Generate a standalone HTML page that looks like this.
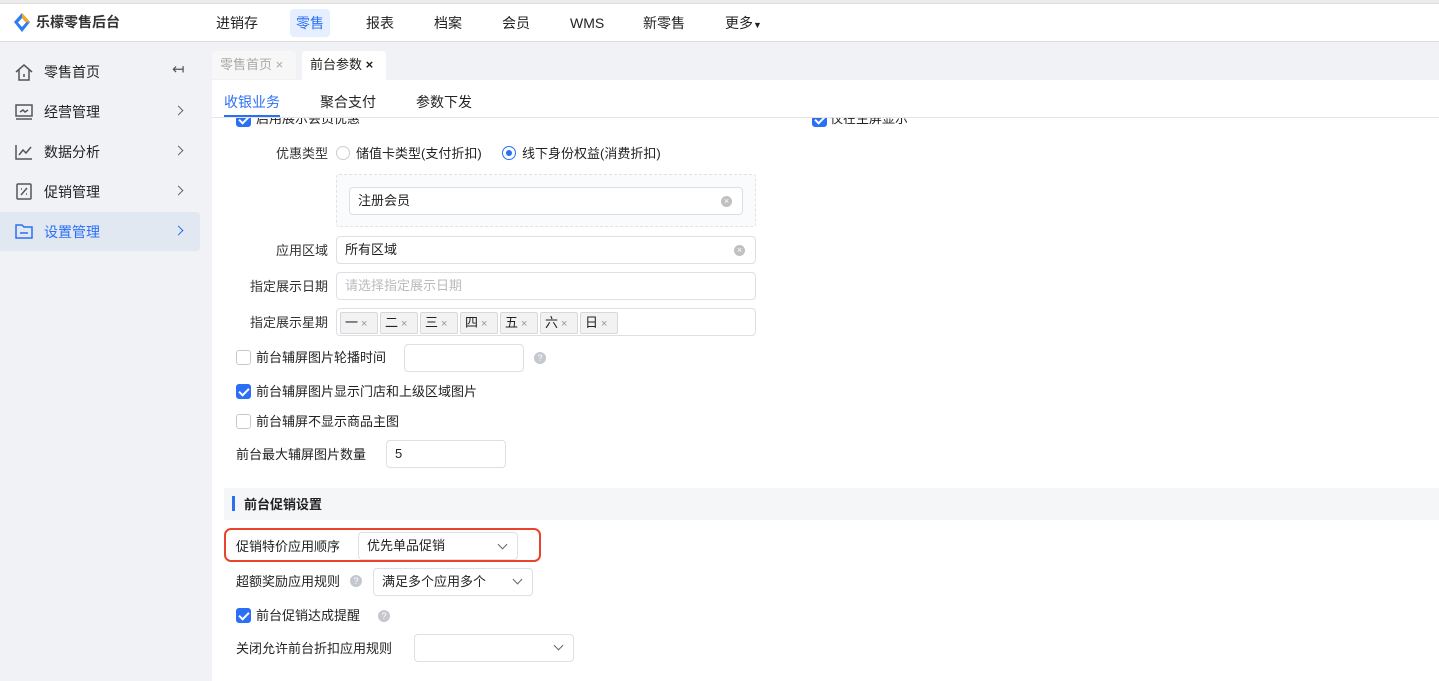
<!DOCTYPE html><html><head><meta charset="utf-8"><style>
*{box-sizing:border-box;margin:0;padding:0}
body{width:1439px;height:681px;overflow:hidden;font-family:"Liberation Sans","Noto Sans CJK SC",sans-serif;font-size:13px;line-height:15px;color:#222;background:#f0f2f5;position:relative}
.a{position:absolute}
.top{left:0;top:3px;width:1439px;height:39px;background:#fff;border-top:1px solid #ddd;border-bottom:1px solid #ddd}
.nav{top:9px;height:28px;line-height:28px;font-size:14px;padding:0 6px;border-radius:4px}
.side{font-size:14px;left:44px;line-height:18px}
.input{border:1px solid #dcdfe6;border-radius:4px;background:#fff;height:28px;line-height:26px;padding-left:8px;font-size:13px}
.lbl{font-size:13px;color:#333;text-align:right}
.cb{width:15px;height:15px;border-radius:3px;border:1px solid #c8c8c8;background:#fff}
.cb.on{background:#2b6ff5;border-color:#2b6ff5}
.cb.on:after{content:"";position:absolute;left:4px;top:1px;width:4px;height:8px;border:solid #fff;border-width:0 2px 2px 0;transform:rotate(45deg)}
.tag{top:3px;width:38px;height:22px;line-height:20px;border:1px solid #d8d8d8;background:#f2f2f2;border-radius:2px;padding:0 4px;font-size:13px}
.tag i{font-style:normal;color:#999;font-size:11px;margin-left:3px}
.q{width:12px;height:12px;border-radius:50%;background:#c5c8ce;color:#fff;font-size:9px;line-height:12px;text-align:center}
.clr{width:11px;height:11px;border-radius:50%;background:#c0c0c0;color:#fff;font-size:9px;line-height:11px;text-align:center}
.chev{width:7px;height:7px;border:solid #666;border-width:0 1.5px 1.5px 0;transform:rotate(45deg)}
.sc{width:7px;height:7px;border:solid #666;border-width:1.5px 1.5px 0 0;transform:rotate(45deg)}
</style></head><body>
<div class="a" style="left:0;top:0;width:1439px;height:3px;background:#ececec"></div>
<div class="a top"></div>
<svg class="a" style="left:14px;top:13px" width="16" height="19" viewBox="0 0 16 19"><path d="M8 0 L16 9 L8 19 L0 9Z" fill="#2b7cf5"/><path d="M8 5 L12 9.5 L8 14 L4 9.5Z" fill="#fff"/><path d="M8 0 L16 9 L12 9.5 L8 5Z" fill="#f5a623"/></svg>
<div class="a" style="left:36px;top:14px;font-size:14px;line-height:17px;font-weight:bold;color:#333">乐檬零售后台</div>
<div class="a nav" style="left:210px">进销存</div>
<div class="a nav" style="left:290px;background:#e6efff;color:#2b6ff5">零售</div>
<div class="a nav" style="left:360px">报表</div>
<div class="a nav" style="left:428px">档案</div>
<div class="a nav" style="left:496px">会员</div>
<div class="a nav" style="left:564px">WMS</div>
<div class="a nav" style="left:637px">新零售</div>
<div class="a nav" style="left:719px">更多<span style="font-size:9px">▼</span></div>

<svg class="a" style="left:14px;top:62px" width="20" height="20" viewBox="0 0 20 20" fill="none" stroke="#555" stroke-width="1.5"><path d="M2 10 L10 3 L18 10 M5 8 V18 H15 V8 M10 12 V15"/></svg>
<div class="a side" style="top:63px">零售首页</div>
<div class="a" style="left:172px;top:62px;font-size:15px;color:#555">↤</div>
<svg class="a" style="left:14px;top:103px" width="20" height="18" viewBox="0 0 20 18" fill="none" stroke="#555" stroke-width="1.5"><rect x="2" y="2" width="16" height="11"/><path d="M2 16 H18 M6 9 l3-2 2 2 3-2"/></svg>
<div class="a side" style="top:103px">经营管理</div>
<svg class="a" style="left:14px;top:143px" width="20" height="18" viewBox="0 0 20 18" fill="none" stroke="#555" stroke-width="1.5"><path d="M2 2 V16 H18 M5 12 l4-5 3 3 5-6"/></svg>
<div class="a side" style="top:143px">数据分析</div>
<svg class="a" style="left:14px;top:182px" width="20" height="19" viewBox="0 0 20 19" fill="none" stroke="#555" stroke-width="1.5"><rect x="3" y="2" width="14" height="15" rx="1"/><path d="M7 13 L13 6 M7 7 h1 M12 12 h1"/></svg>
<div class="a side" style="top:183px">促销管理</div>
<div class="a" style="left:0;top:212px;width:200px;height:39px;background:#e2e8f2;border-radius:0 4px 4px 0"></div>
<svg class="a" style="left:14px;top:222px" width="20" height="18" viewBox="0 0 20 18" fill="none" stroke="#2b6ff5" stroke-width="1.5"><path d="M2 3 H8 L10 5 H18 V16 H2Z M6 11 H14"/></svg>
<div class="a side" style="top:223px;color:#2b6ff5">设置管理</div>
<div class="a sc" style="left:175px;top:107px"></div>
<div class="a sc" style="left:175px;top:147px"></div>
<div class="a sc" style="left:175px;top:187px"></div>
<div class="a sc" style="left:175px;top:227px;border-color:#2b6ff5"></div>

<div class="a" style="left:212px;top:51px;width:84px;height:28px;background:#f7f7f7;border-radius:4px 4px 0 0;color:#aaa;font-size:13px;line-height:28px;padding-left:8px">零售首页 ×</div>
<div class="a" style="left:302px;top:51px;width:84px;height:29px;background:#fff;border-radius:4px 4px 0 0;font-size:13px;line-height:28px;padding-left:8px">前台参数 <b>×</b></div>
<div class="a" style="left:212px;top:80px;width:1227px;height:601px;background:#fff"></div>
<div class="a" style="left:224px;top:94px;font-size:14px;line-height:17px;color:#2b6ff5">收银业务</div>
<div class="a" style="left:320px;top:94px;font-size:14px;line-height:17px">聚合支付</div>
<div class="a" style="left:416px;top:94px;font-size:14px;line-height:17px">参数下发</div>
<div class="a" style="left:212px;top:117px;width:1227px;height:1px;background:#e4e4e4"></div>
<div class="a" style="left:224px;top:115px;width:56px;height:2px;background:#2b6ff5"></div>
<div class="a" style="left:212px;top:118px;width:1227px;height:10px;overflow:hidden">
 <div class="a cb on" style="left:24px;top:-6px"></div><div class="a" style="left:44px;top:-7px">启用展示会员优惠</div>
 <div class="a cb on" style="left:600px;top:-6px"></div><div class="a" style="left:618px;top:-7px">仅在主屏显示</div>
</div>
<div class="a lbl" style="left:276px;top:146px">优惠类型</div>
<div class="a" style="left:336px;top:146px;width:14px;height:14px;border-radius:50%;border:1px solid #ccc"></div>
<div class="a" style="left:356px;top:146px">储值卡类型(支付折扣)</div>
<div class="a" style="left:502px;top:146px;width:14px;height:14px;border-radius:50%;border:1px solid #2b6ff5"><div class="a" style="left:3px;top:3px;width:6px;height:6px;border-radius:50%;background:#2b6ff5"></div></div>
<div class="a" style="left:522px;top:146px">线下身份权益(消费折扣)</div>
<div class="a" style="left:336px;top:174px;width:420px;height:53px;border:1px dashed #e2e2e2;background:#fafbfc;border-radius:3px"></div>
<div class="a input" style="left:349px;top:187px;width:394px">注册会员</div><div class="a clr" style="left:721px;top:196px">×</div>
<div class="a lbl" style="left:276px;top:243px">应用区域</div>
<div class="a input" style="left:336px;top:236px;width:420px">所有区域</div><div class="a clr" style="left:734px;top:245px">×</div>
<div class="a lbl" style="left:250px;top:279px">指定展示日期</div>
<div class="a input" style="left:336px;top:272px;width:420px;color:#bbb">请选择指定展示日期</div>
<div class="a lbl" style="left:250px;top:315px">指定展示星期</div>
<div class="a input" style="left:336px;top:308px;width:420px;padding:0">
 <div class="a tag" style="left:3px">一<i>×</i></div><div class="a tag" style="left:43px">二<i>×</i></div><div class="a tag" style="left:83px">三<i>×</i></div><div class="a tag" style="left:123px">四<i>×</i></div><div class="a tag" style="left:163px">五<i>×</i></div><div class="a tag" style="left:203px">六<i>×</i></div><div class="a tag" style="left:243px">日<i>×</i></div>
</div>
<div class="a cb" style="left:236px;top:350px"></div><div class="a" style="left:256px;top:350px">前台辅屏图片轮播时间</div>
<div class="a input" style="left:404px;top:344px;width:120px"></div><div class="a q" style="left:534px;top:352px">?</div>
<div class="a cb on" style="left:236px;top:384px"></div><div class="a" style="left:256px;top:384px">前台辅屏图片显示门店和上级区域图片</div>
<div class="a cb" style="left:236px;top:414px"></div><div class="a" style="left:256px;top:414px">前台辅屏不显示商品主图</div>
<div class="a" style="left:236px;top:447px">前台最大辅屏图片数量</div>
<div class="a input" style="left:386px;top:440px;width:120px">5</div>
<div class="a" style="left:224px;top:488px;width:1215px;height:32px;background:#f5f6f8"></div>
<div class="a" style="left:232px;top:496px;width:3px;height:15px;background:#2b6ff5"></div>
<div class="a" style="left:244px;top:497px;font-weight:bold">前台促销设置</div>
<div class="a" style="left:224px;top:528px;width:317px;height:34px;border:2.5px solid #e8432d;border-radius:7px"></div>
<div class="a" style="left:236px;top:539px">促销特价应用顺序</div>
<div class="a input" style="left:358px;top:532px;width:160px;color:#222">优先单品促销</div><div class="a chev" style="left:499px;top:541px"></div>
<div class="a" style="left:236px;top:574px">超额奖励应用规则</div><div class="a q" style="left:350px;top:575px">?</div>
<div class="a input" style="left:373px;top:568px;width:160px">满足多个应用多个</div><div class="a chev" style="left:514px;top:576px"></div>
<div class="a cb on" style="left:236px;top:608px"></div><div class="a" style="left:256px;top:608px">前台促销达成提醒</div><div class="a q" style="left:378px;top:610px">?</div>
<div class="a" style="left:236px;top:641px">关闭允许前台折扣应用规则</div>
<div class="a input" style="left:414px;top:634px;width:160px"></div><div class="a chev" style="left:555px;top:642px"></div>
</body></html>
